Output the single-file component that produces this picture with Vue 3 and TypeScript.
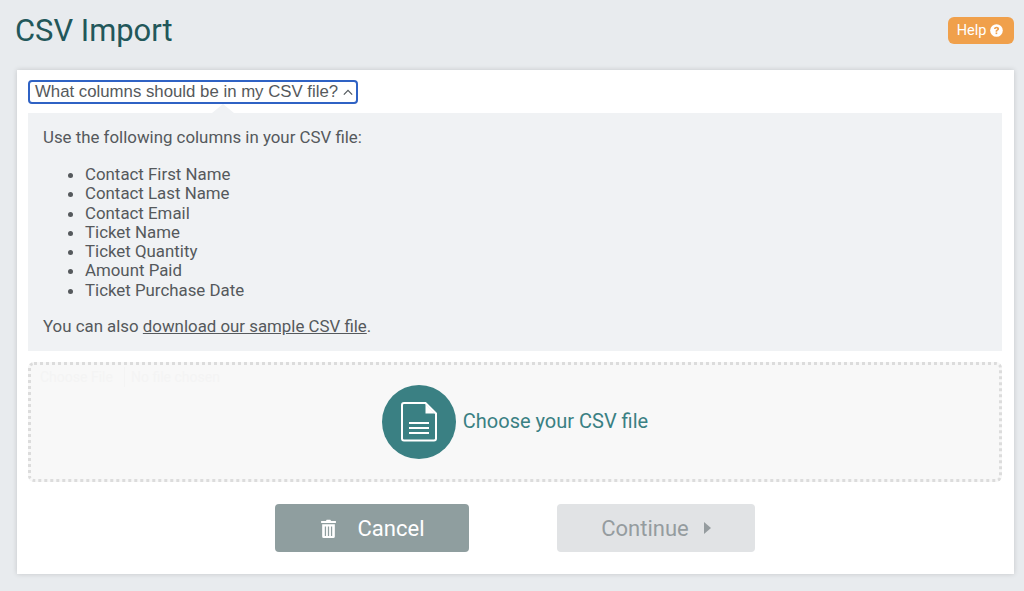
<script setup lang="ts">
const columns: string[] = [
  'Contact First Name',
  'Contact Last Name',
  'Contact Email',
  'Ticket Name',
  'Ticket Quantity',
  'Amount Paid',
  'Ticket Purchase Date',
]
</script>

<template>
  <div class="page">
    <header class="top">
      <h1 class="title">CSV Import</h1>
      <a class="help">Help
        <svg class="help-icon" viewBox="0 0 14 14" width="13" height="13" aria-hidden="true">
          <circle cx="7" cy="7" r="6.8" fill="#fff" />
          <path d="M4.300 5.300C4.400 3.800 5.600 2.900 7.100 2.900c1.500 0 2.700.9 2.700 2.200 0 1.100-.6 1.600-1.300 2-.5.300-.7.500-.7 1v.2H6v-.4c0-.9.400-1.300 1-1.700.5-.3.800-.5.800-.9 0-.4-.3-.7-.8-.7-.5 0-.9.300-1 .9z" fill="#f0a04b" />
          <rect x="6" y="9.100" width="1.800" height="1.800" fill="#f0a04b" />
        </svg>
      </a>
    </header>

    <main class="card">
      <button class="toggle" type="button">
        <span>What columns should be in my CSV file?</span>
        <svg viewBox="0 0 12 8" width="10" height="7" aria-hidden="true">
          <path d="M1 6.500 6 1.500l5 5" fill="none" stroke="#555b5f" stroke-width="1.500" />
        </svg>
      </button>

      <section class="info">
        <span class="notch"></span>
        <p class="lead">Use the following columns in your CSV file:</p>
        <ul class="cols">
          <li v-for="c in columns" :key="c">{{ c }}</li>
        </ul>
        <p class="foot">You can also <a class="link">download our sample CSV file</a>.</p>
      </section>

      <section class="drop">
        <span class="native"><span class="native-btn">Choose File</span><span>No file chosen</span></span>
        <span class="disc">
          <svg viewBox="0 0 36 40" width="36" height="40" aria-hidden="true">
            <path d="M3 1h21.500L35 11.500V36.500a2 2 0 0 1-2 2H3a2 2 0 0 1-2-2V3a2 2 0 0 1 2-2z" fill="none" stroke="#fff" stroke-width="2" />
            <path d="M24.500 2v9.500H34z" fill="#fff" />
            <path d="M8 21h20M8 26h20M8 31h20" stroke="#fff" stroke-width="2" />
          </svg>
        </span>
        <span class="choose">Choose your CSV file</span>
      </section>

      <footer class="actions">
        <button class="btn cancel" type="button">
          <svg viewBox="0 0 16 18" width="17" height="19" aria-hidden="true">
            <path d="M5.500 2 6.300.6h3.400L10.500 2H15v1.800H1V2z" fill="#fff" />
            <path fill-rule="evenodd" d="M2 5h12v11.500a1.500 1.500 0 0 1-1.500 1.500h-9A1.500 1.500 0 0 1 2 16.500zM4.500 7v9h1.200V7zm2.900 0v9h1.200V7zm2.900 0v9h1.200V7z" fill="#fff" />
          </svg>
          <span>Cancel</span>
        </button>
        <button class="btn next" type="button" disabled>
          <span>Continue</span>
          <svg viewBox="0 0 7 12" width="7" height="12" aria-hidden="true">
            <path d="M0 0l7 6-7 6z" fill="#959c9f" />
          </svg>
        </button>
      </footer>
    </main>
  </div>
</template>

<style>
html, body { margin: 0; background: #e8ebee; }
</style>

<style scoped>
.page {
  width: 1024px;
  height: 591px;
  overflow: hidden;
  box-sizing: border-box;
  background: #e8ebee;
  font-family: Roboto, "Liberation Sans", sans-serif;
  color: #55595c;
}
.top {
  height: 70px;
  box-sizing: border-box;
  padding: 12px 10px 0 15px;
  display: flex;
  justify-content: space-between;
  align-items: flex-start;
}
.title {
  margin: 0;
  font-size: 30.900px;
  line-height: 38px;
  font-weight: 400;
  color: #22575a;
}
.help {
  margin-top: 5px;
  width: 66px;
  height: 27px;
  box-sizing: border-box;
  border-radius: 6px;
  background: #f0a04b;
  color: #fff;
  font-size: 14.500px;
  display: flex;
  align-items: center;
  justify-content: center;
  gap: 4px;
  padding-right: 2px;
}
.help-icon { display: block; }
.card {
  margin-left: 17px;
  width: 997px;
  height: 504px;
  box-sizing: border-box;
  background: #fff;
  box-shadow: 0 0 5px rgba(0, 0, 0, 0.16);
  padding: 10px 12px 0 11px;
}
.toggle {
  display: flex;
  align-items: center;
  gap: 5px;
  width: 330px;
  height: 24px;
  box-sizing: border-box;
  padding: 0 0 0 5px;
  background: #fff;
  border: 2px solid #2f62c4;
  border-radius: 4px;
  font-family: "Liberation Sans", Arial, sans-serif;
  font-size: 16.800px;
  color: #55595c;
  white-space: nowrap;
}
.info {
  position: relative;
  margin-top: 9px;
  height: 238px;
  box-sizing: border-box;
  padding: 14px 15px 0;
  background: #f0f2f4;
  font-size: 16.850px;
}
.notch {
  position: absolute;
  left: 184px;
  top: -9px;
  width: 0;
  height: 0;
  border-left: 11px solid transparent;
  border-right: 11px solid transparent;
  border-bottom: 9px solid #f0f2f4;
}
.lead, .foot { margin: 0; line-height: 20px; }
.cols {
  margin: 18px 0 16px;
  padding-left: 42px;
  line-height: 19.250px;
}
.link { color: #55595c; text-decoration: underline; }
.drop {
  position: relative;
  margin-top: 11px;
  height: 120px;
  box-sizing: border-box;
  background: #f8f8f8;
  border: 3px dotted #dcdcdc;
  border-radius: 6px;
  display: flex;
  align-items: center;
  justify-content: center;
  gap: 7px;
}
.native {
  position: absolute;
  left: 9px;
  top: 2px;
  font-size: 14px;
  line-height: 20px;
  color: #f4f4f4;
  display: flex;
  gap: 6px;
}
.native-btn {
  width: 84px;
  border-right: 1px solid #f4f4f4;
}
.disc {
  width: 74px;
  height: 74px;
  border-radius: 50%;
  background: #3a8083;
  display: flex;
  align-items: center;
  justify-content: center;
}
.choose {
  font-size: 20px;
  line-height: 24px;
  margin-top: -2px;
  color: #3a8083;
}
.actions {
  margin-top: 22px;
  display: flex;
  gap: 88px;
  padding-left: 247px;
}
.btn {
  height: 48px;
  border: 0;
  border-radius: 4px;
  display: flex;
  align-items: center;
  justify-content: center;
  font-family: Roboto, "Liberation Sans", sans-serif;
  font-size: 22px;
}
.cancel {
  width: 194px;
  background: #8f9e9f;
  color: #fff;
  gap: 21px;
}
.next {
  width: 198px;
  background: #e1e3e5;
  color: #959c9f;
  gap: 15px;
}
</style>
